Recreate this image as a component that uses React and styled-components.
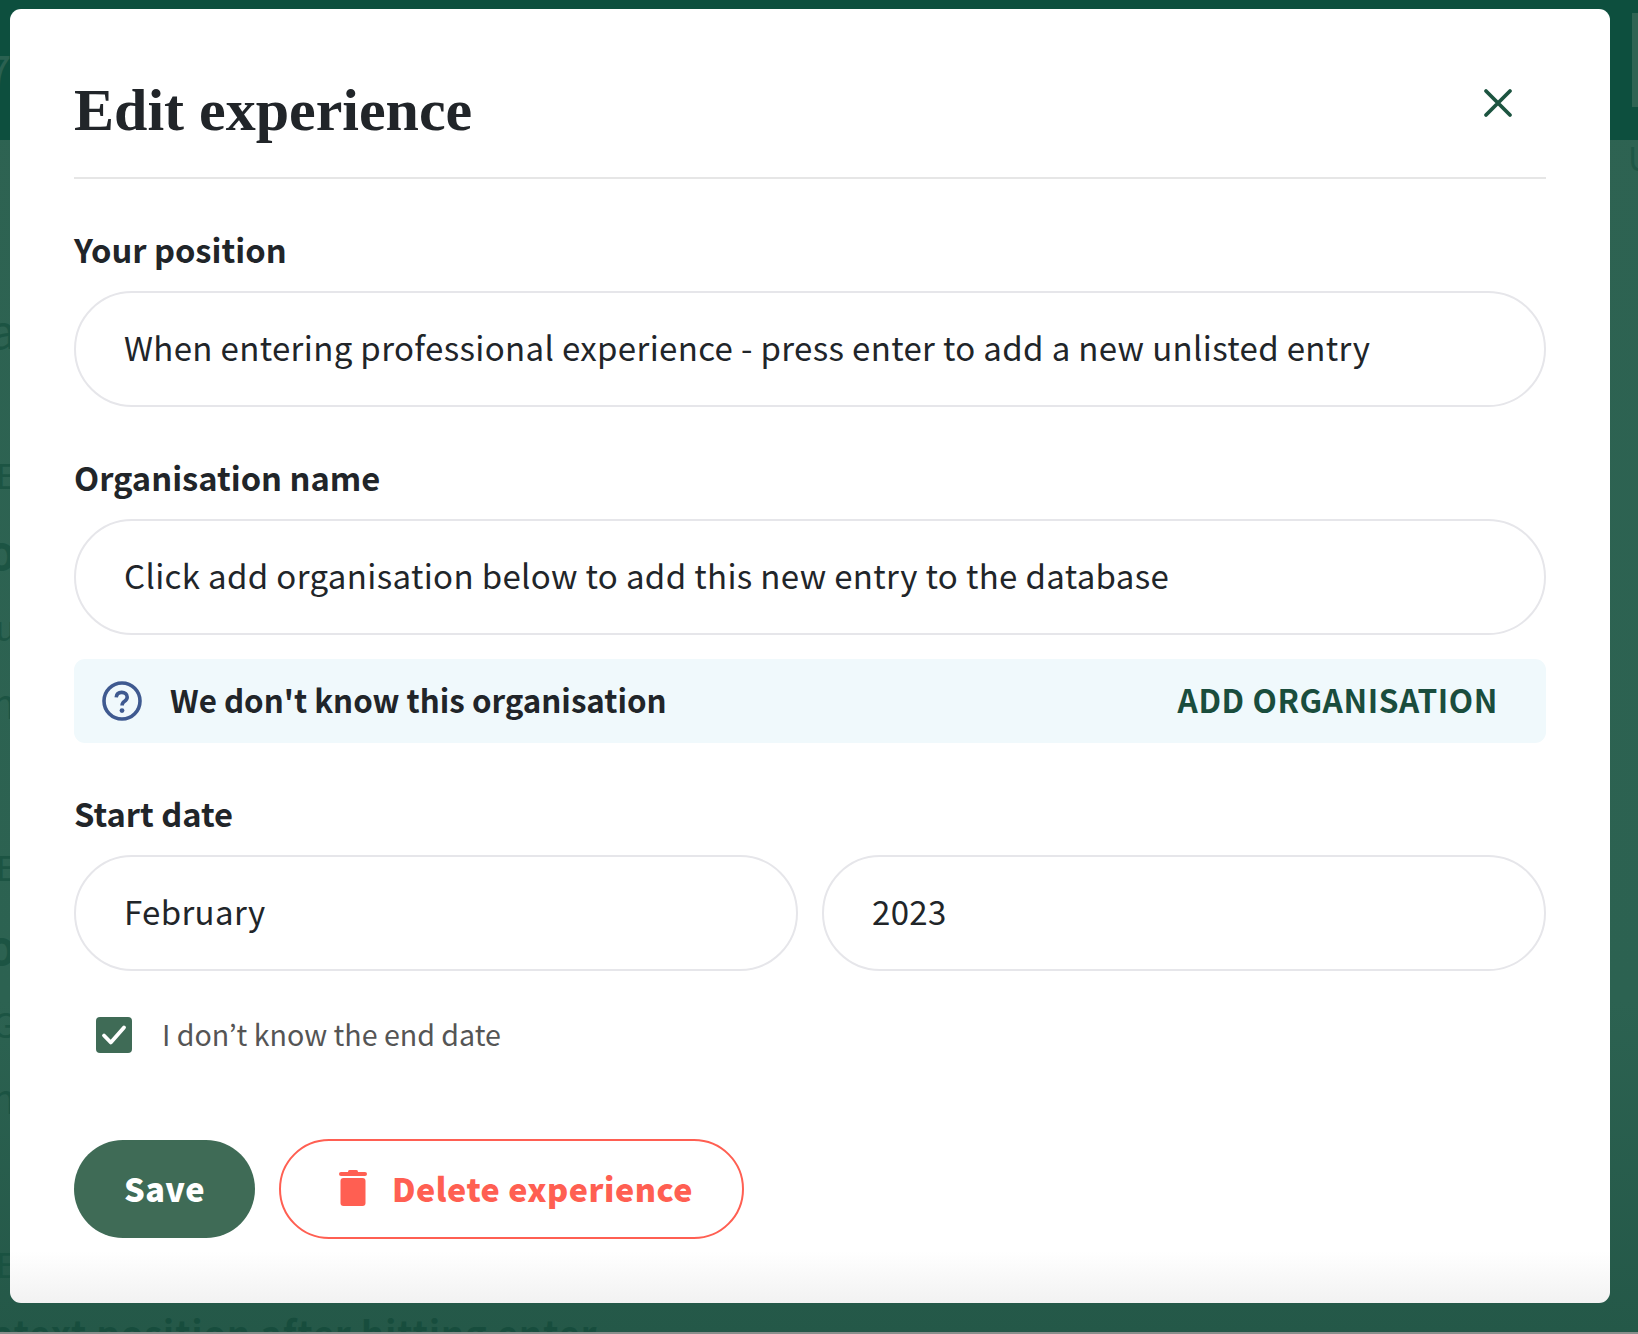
import React from "react";
import styled, { createGlobalStyle } from "styled-components";

const GlobalStyle = createGlobalStyle`
  html, body { margin: 0; padding: 0; background: #2c6150; }
  * { box-sizing: border-box; }
`;

const SANS = `"Noto Sans CJK JP", "Open Sans", sans-serif`;

const backdropRows = [
  { text: "a", top: 166, size: 46, weight: 400 },
  { text: "E", top: 106, size: 34, weight: 400 },
  { text: "o", top: 35, size: 46, weight: 700 },
  { text: "u", top: 37, size: 34, weight: 400 },
  { text: "n", top: 38, size: 40, weight: 400 },
  { text: "E", top: 128, size: 34, weight: 400 },
  { text: "o", top: 38, size: 46, weight: 700 },
  { text: "G", top: 39, size: 34, weight: 400 },
  { text: "n", top: 36, size: 40, weight: 400 },
  { text: "E", top: 130, size: 34, weight: 400 },
];

const App = () => {
  return (
    <Page>
      <GlobalStyle />
      <TopBand>
        <BandGlyph>7</BandGlyph>
        <BandPanel />
      </TopBand>
      <Backdrop>
        <SideText>
          {backdropRows.map((row, index) => (
            <SideGlyph key={index} $top={row.top} $size={row.size} $weight={row.weight}>
              {row.text}
            </SideGlyph>
          ))}
        </SideText>
        <EdgeLetter>U</EdgeLetter>
        <BottomText>atext position after hitting enter</BottomText>
        <BottomEdge />
      </Backdrop>

      <Modal>
        <Header>
          <Title>Edit experience</Title>
          <CloseButton aria-label="Close">
            <svg width="30" height="30" viewBox="0 0 30 30" fill="none">
              <path
                d="M3 3L27 27M27 3L3 27"
                stroke="#1c5440"
                strokeWidth="3.800"
                strokeLinecap="round"
              />
            </svg>
          </CloseButton>
        </Header>

        <Field>
          <Label>Your position</Label>
          <Input>When entering professional experience - press enter to add a new unlisted entry</Input>
        </Field>

        <Field>
          <Label>Organisation name</Label>
          <Input>Click add organisation below to add this new entry to the database</Input>
        </Field>

        <Notice>
          <NoticeLeft>
            <svg width="40" height="40" viewBox="0 0 40 40" fill="none">
              <circle cx="20" cy="20" r="18" stroke="#3f5a90" strokeWidth="3.600" />
              <path
                d="M14.200 16.400c.3-3.200 2.600-5 5.500-5 3.200 0 5.500 1.900 5.500 4.700 0 2.200-1.200 3.300-2.900 4.400-1.500 1-2.200 2-2.200 4"
                stroke="#3f5a90"
                strokeWidth="3.600"
              />
              <circle cx="20" cy="29.600" r="2.400" fill="#3f5a90" />
            </svg>
            <NoticeText>We don't know this organisation</NoticeText>
          </NoticeLeft>
          <NoticeAction>ADD ORGANISATION</NoticeAction>
        </Notice>

        <Field>
          <Label>Start date</Label>
          <DateRow>
            <Input>February</Input>
            <Input>2023</Input>
          </DateRow>
        </Field>

        <CheckRow>
          <CheckBox>
            <svg width="26" height="22" viewBox="0 0 26 22" fill="none">
              <path
                d="M3 11.500L9.800 18.500L23 3.500"
                stroke="#fff"
                strokeWidth="3.800"
                strokeLinecap="round"
                strokeLinejoin="round"
              />
            </svg>
          </CheckBox>
          <CheckLabel>I don’t know the end date</CheckLabel>
        </CheckRow>

        <Actions>
          <SaveButton>Save</SaveButton>
          <DeleteButton>
            <svg width="28" height="36" viewBox="0 0 28 36" fill="#ff5f52">
              <rect x="0" y="2" width="28" height="4" rx="2" />
              <rect x="9" y="0" width="10" height="4" rx="1.500" />
              <rect x="1.500" y="8" width="25" height="28" rx="3" />
            </svg>
            Delete experience
          </DeleteButton>
        </Actions>
      </Modal>
    </Page>
  );
};

export default App;

const Page = styled.div`
  position: relative;
  width: 1638px;
  height: 1334px;
  overflow: hidden;
  font-family: ${SANS};
  background: linear-gradient(to bottom, #2e6352 0%, #2c6251 75%, #245848 100%);
`;

const TopBand = styled.div`
  position: relative;
  height: 140px;
  background: #0d4f3e;
`;

const BandGlyph = styled.span`
  position: absolute;
  left: -14px;
  top: 36px;
  font-size: 46px;
  color: #2a6151;
`;

const BandPanel = styled.div`
  position: absolute;
  left: 1632px;
  top: 13px;
  width: 6px;
  height: 94px;
  background: #2f6453;
`;

const Backdrop = styled.div`
  position: relative;
  height: 1194px;
`;

const SideText = styled.div`
  display: flex;
  flex-direction: column;
  width: 10px;
  overflow: hidden;
  align-items: flex-end;
`;

const SideGlyph = styled.span`
  margin-top: ${props => props.$top}px;
  margin-right: -6px;
  font-size: ${props => props.$size}px;
  font-weight: ${props => props.$weight};
  line-height: 1;
  color: #17503f;
  opacity: 0.75;
`;

const EdgeLetter = styled.span`
  position: absolute;
  left: 1628px;
  top: 0;
  font-size: 32px;
  line-height: 1.100;
  color: #1f5746;
`;

const BottomText = styled.div`
  position: absolute;
  left: -8px;
  top: 1169px;
  font-size: 36px;
  line-height: 44px;
  font-weight: 700;
  letter-spacing: 1.100px;
  white-space: nowrap;
  color: #174d3d;
`;

const BottomEdge = styled.div`
  position: absolute;
  left: 0;
  right: 0;
  bottom: 0;
  height: 2px;
  background: #8a8f8d;
`;

const Modal = styled.div`
  position: absolute;
  left: 10px;
  top: 9px;
  width: 1600px;
  height: 1294px;
  padding: 0 64px;
  border-radius: 11px;
  background: linear-gradient(to bottom, #fff 0%, #fff 96%, #f2f2f2 100%);
`;

const Header = styled.div`
  display: flex;
  align-items: flex-start;
  justify-content: space-between;
  height: 170px;
  border-bottom: 2px solid #e6e6e6;
`;

const Title = styled.h1`
  margin: 68px 0 0;
  font-family: "Liberation Serif", serif;
  font-size: 60px;
  line-height: 66px;
  font-weight: 700;
  color: #212529;
`;

const CloseButton = styled.button`
  display: flex;
  margin: 79px 33px 0 0;
  padding: 0;
  border: 0;
  background: none;
`;

const Field = styled.div`
  display: flex;
  flex-direction: column;
  gap: 20px;
  margin-top: 52px;
`;

const Label = styled.div`
  height: 40px;
  font-size: 32.700px;
  line-height: 35px;
  font-weight: 700;
  color: #212529;
`;

const Input = styled.div`
  display: flex;
  align-items: center;
  flex: 1 1 auto;
  width: 100%;
  min-height: 116px;
  padding: 0 48px 4px;
  border: 2px solid #e6e6ea;
  border-radius: 58px;
  font-size: 33px;
  letter-spacing: 0.350px;
  color: #212529;
`;

const Notice = styled.div`
  display: flex;
  align-items: center;
  justify-content: space-between;
  height: 84px;
  margin-top: 24px;
  padding: 0 48px 0 28px;
  border-radius: 11px;
  background: #f0f9fc;
`;

const NoticeLeft = styled.div`
  display: flex;
  align-items: center;
  gap: 28px;
`;

const NoticeText = styled.span`
  position: relative;
  top: -2px;
  font-size: 31.300px;
  font-weight: 700;
  color: #212529;
`;

const NoticeAction = styled.span`
  position: relative;
  top: -2px;
  font-size: 31.600px;
  font-weight: 700;
  letter-spacing: 0.600px;
  color: #1a4d3d;
`;

const DateRow = styled.div`
  display: flex;
  gap: 24px;
`;

const CheckRow = styled.div`
  display: flex;
  align-items: center;
  gap: 30px;
  margin: 43px 0 0 22px;
`;

const CheckBox = styled.div`
  display: flex;
  align-items: center;
  justify-content: center;
  width: 36px;
  height: 36px;
  border-radius: 4px;
  background: #3f6b56;
`;

const CheckLabel = styled.span`
  position: relative;
  top: -1px;
  font-size: 28.600px;
  color: #555;
`;

const Actions = styled.div`
  display: flex;
  align-items: center;
  gap: 24px;
  margin-top: 84px;
`;

const SaveButton = styled.button`
  width: 181px;
  height: 98px;
  padding: 0 0 3px;
  border: 0;
  border-radius: 49px;
  background: #3f6b56;
  font-family: ${SANS};
  font-size: 32.500px;
  font-weight: 900;
  letter-spacing: 0.500px;
  color: #fff;
`;

const DeleteButton = styled.button`
  display: flex;
  align-items: center;
  gap: 25px;
  width: 465px;
  height: 100px;
  padding: 0 0 3px 58px;
  border: 2px solid #ff5f52;
  border-radius: 50px;
  background: #fff;
  font-family: ${SANS};
  font-size: 32.300px;
  font-weight: 900;
  letter-spacing: 0.500px;
  color: #ff5f52;
`;
